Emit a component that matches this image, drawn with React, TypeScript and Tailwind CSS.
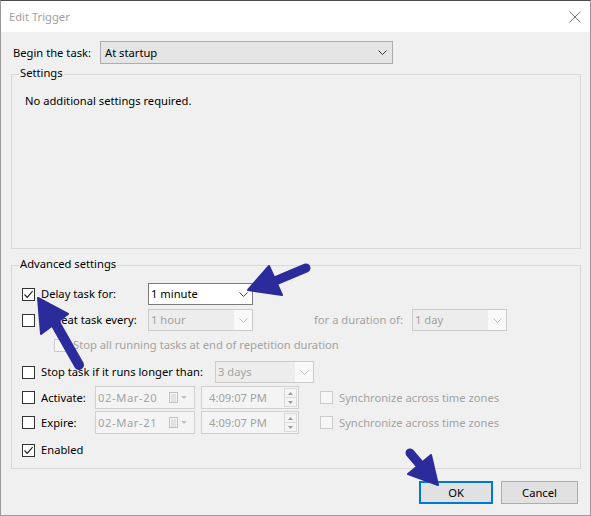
import React from "react";

const FONT = { fontFamily: '"Noto Sans", "Segoe UI", Arial, sans-serif' };

function Chevron({ color = "#444" }: { color?: string }) {
  return (
    <svg width="9" height="5" viewBox="0 0 9 5" className="shrink-0">
      <path d="M0.5 0.5 L4.5 4.5 L8.5 0.5" fill="none" stroke={color} strokeWidth="1" />
    </svg>
  );
}

function Check({ checked = false, disabled = false }: { checked?: boolean; disabled?: boolean }) {
  return (
    <div
      className={`w-[13px] h-[13px] shrink-0 border flex items-center justify-center ${
        disabled ? "border-[#cccccc] bg-[#f7f7f7]" : "border-[#333333] bg-white"
      }`}
    >
      {checked && (
        <svg width="11" height="11" viewBox="0 0 11 11">
          <path d="M1.5 5.5 L4.2 8.3 L9.6 2.2" fill="none" stroke="#222" strokeWidth="1.2" />
        </svg>
      )}
    </div>
  );
}

function Combo({ value, width, disabled = false }: { value: string; width: string; disabled?: boolean }) {
  return (
    <div
      className={`${width} h-[22px] shrink-0 border flex items-center ${
        disabled ? "border-[#cccccc] bg-[#f9f9f9]" : "border-[#7a7a7a] bg-white"
      }`}
    >
      <div className={`flex-1 h-full flex items-center pl-[2px] ${disabled ? "bg-[#ededed] text-[#a3a3a3]" : "text-black"}`}>
        {value}
      </div>
      <div className="w-[18px] h-full flex items-center justify-center">
        <Chevron color={disabled ? "#bdbdbd" : "#444"} />
      </div>
    </div>
  );
}

function DateBox({ value }: { value: string }) {
  return (
    <div className="w-[100px] h-[23px] shrink-0 border border-[#d0d0d0] bg-[#f4f4f4] flex items-center pl-[2px] text-[#a3a3a3]">
      <span className="flex-1 tracking-[0.6px]">{value}</span>
      <svg width="20" height="11" viewBox="0 0 20 11" className="mr-[5px]">
        <rect x="0.5" y="0.5" width="8" height="10" fill="#f4f4f4" stroke="#c2c2c2" />
        <path d="M2 3 H7 M2 5 H7 M2 7 H7 M2 9 H7" stroke="#d0d0d0" strokeWidth="1" />
        <path d="M12 4 L18 4 L15 7 Z" fill="#c2c2c2" />
      </svg>
    </div>
  );
}

function TimeBox({ value }: { value: string }) {
  return (
    <div className="w-[98px] h-[23px] shrink-0 border border-[#d0d0d0] bg-[#f4f4f4] flex items-center text-[#a3a3a3]">
      <span className="flex-1 pl-[7px]">{value}</span>
      <div className="w-[13px] h-[19px] mr-[1px] border border-[#dadada] flex flex-col">
        <div className="flex-1 flex items-center justify-center border-b border-[#dadada]">
          <svg width="5" height="3" viewBox="0 0 5 3"><path d="M0 3 L2.5 0 L5 3 Z" fill="#9a9a9a" /></svg>
        </div>
        <div className="flex-1 flex items-center justify-center">
          <svg width="5" height="3" viewBox="0 0 5 3"><path d="M0 0 L2.5 3 L5 0 Z" fill="#9a9a9a" /></svg>
        </div>
      </div>
    </div>
  );
}

function GroupBox({ title, className, children }: { title: string; className: string; children?: React.ReactNode }) {
  return (
    <div className={`relative border border-[#d9d9d9] ${className}`}>
      <span className="absolute -top-[10px] left-[7px] px-[1px] bg-[#f0f0f0] leading-[16px]">{title}</span>
      {children}
    </div>
  );
}

export default function App() {
  return (
    <div
      className="relative w-[591px] h-[516px] bg-[#f0f0f0] border-t border-t-[#4d4d4d] border-x border-x-[#9a9a9a] border-b border-b-[#9a9a9a] text-[11.2px] leading-[16px] text-black overflow-hidden"
      style={FONT}
    >
      {/* title bar */}
      <div className="h-[31px] bg-white flex items-center justify-between pl-[8px] pr-[9px]">
        <span className="text-[#a0a0a0]">Edit Trigger</span>
        <svg width="12" height="12" viewBox="0 0 12 12">
          <path d="M0.5 0.5 L11.5 11.5 M11.5 0.5 L0.5 11.5" stroke="#777" strokeWidth="1" />
        </svg>
      </div>

      <div className="pt-[9px] pl-[10px] pr-[9px]">
        <div className="flex items-center h-[23px]">
          <span className="w-[89px] pl-[2px]">Begin the task:</span>
          <div className="w-[293px] h-[23px] border border-[#adadad] bg-[#e5e5e5] flex items-center pl-[4px]">
            <span className="flex-1">At startup</span>
            <div className="w-[20px] flex justify-center">
              <Chevron color="#333" />
            </div>
          </div>
        </div>

        <GroupBox title="Settings" className="mt-[10px] h-[175px]">
          <div className="pt-[18px] pl-[13px]">No additional settings required.</div>
        </GroupBox>

        <GroupBox title="Advanced settings" className="mt-[16px] h-[204px]">
          <div className="pt-[17px] pl-[10px] flex flex-col">
            <div className="flex items-center h-[22px]">
              <Check checked />
              <span className="w-[113px] pl-[6px]">Delay task for:</span>
              <Combo value="1 minute" width="w-[105px]" />
            </div>

            <div className="flex items-center h-[22px] mt-[4px]">
              <Check />
              <span className="w-[113px] pl-[6px]">Repeat task every:</span>
              <Combo value="1 hour" width="w-[105px]" disabled />
              <span className="w-[159px] pl-[61px] text-[#a3a3a3]">for a duration of:</span>
              <Combo value="1 day" width="w-[95px]" disabled />
            </div>

            <div className="flex items-center h-[14px] mt-[7px] pl-[32px]">
              <Check disabled />
              <span className="pl-[6px] text-[#a3a3a3]">Stop all running tasks at end of repetition duration</span>
            </div>

            <div className="flex items-center h-[22px] mt-[9px]">
              <Check />
              <span className="w-[180px] pl-[6px]">Stop task if it runs longer than:</span>
              <Combo value="3 days" width="w-[99px]" disabled />
            </div>

            <div className="flex items-center h-[23px] mt-[3px]">
              <Check />
              <span className="w-[60px] pl-[6px]">Activate:</span>
              <DateBox value="02-Mar-20" />
              <div className="w-[6px]" />
              <TimeBox value="4:09:07 PM" />
              <div className="w-[21px]" />
              <Check disabled />
              <span className="pl-[6px] text-[#a3a3a3]">Synchronize across time zones</span>
            </div>

            <div className="flex items-center h-[23px] mt-[2px]">
              <Check />
              <span className="w-[60px] pl-[6px]">Expire:</span>
              <DateBox value="02-Mar-21" />
              <div className="w-[6px]" />
              <TimeBox value="4:09:07 PM" />
              <div className="w-[21px]" />
              <Check disabled />
              <span className="pl-[6px] text-[#a3a3a3]">Synchronize across time zones</span>
            </div>

            <div className="flex items-center h-[14px] mt-[9px]">
              <Check checked />
              <span className="pl-[6px]">Enabled</span>
            </div>
          </div>
        </GroupBox>

        <div className="flex justify-end gap-[8px] mt-[12px] pr-[3px]">
          <button className="w-[74px] h-[23px] border-2 border-[#0078d7] bg-[#e1e1e1] flex items-center justify-center">
            OK
          </button>
          <button className="w-[77px] h-[23px] border border-[#adadad] bg-[#e1e1e1] flex items-center justify-center">
            Cancel
          </button>
        </div>
      </div>

      {/* annotation arrows drawn over the dialog */}
      <svg className="absolute left-0 top-0 pointer-events-none" width="591" height="516" viewBox="0 0 591 516">
        <g fill="#2b2b9b" stroke="#2b2b9b" strokeLinecap="round" strokeLinejoin="round">
          <line x1="274" y1="280" x2="305" y2="267" strokeWidth="9" />
          <path d="M247 289 L268 265 L281 294 Z" strokeWidth="2" />

          <line x1="53" y1="320" x2="78" y2="364" strokeWidth="10" />
          <path d="M37 297 L67 313 L40 333 Z" strokeWidth="2" />

          <line x1="409" y1="452" x2="421" y2="466" strokeWidth="9" />
          <path d="M437 484 L430 454 L407 473 Z" strokeWidth="2" />
        </g>
      </svg>
    </div>
  );
}
